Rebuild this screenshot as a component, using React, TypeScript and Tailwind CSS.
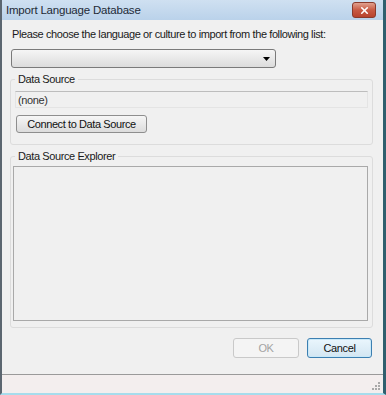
import { X } from "lucide-react";

function GripDots() {
  // resize grip in the status bar corner
  const dots = [
    [7, 1],
    [4, 4],
    [7, 4],
    [1, 7],
    [4, 7],
    [7, 7],
  ];
  return (
    <svg width="10" height="10" viewBox="0 0 10 10">
      {dots.map(([x, y]) => (
        <rect key={`${x}-${y}`} x={x} y={y} width="2" height="2" fill="#a9a9a9" />
      ))}
    </svg>
  );
}

export default function App() {
  return (
    <div
      className="flex h-[395px] w-[386px] flex-col overflow-hidden border-l-2 border-r-[3px] border-b-2 border-l-[#5b6670] border-r-[#2f5f6e] border-b-[#a6dcec] bg-[#f0f0f0] text-[11px] leading-[14px] tracking-[-0.4px] text-[#1a1a1a]"
      style={{ fontFamily: '"Liberation Sans", Arial, sans-serif' }}
    >
      {/* Title bar */}
      <div className="flex h-[20px] shrink-0 items-center justify-between bg-gradient-to-b from-[#cfe0f1] to-[#bad2ea] pl-[4px] pr-[7px]">
        <span className="text-[11.5px] tracking-[-0.2px] text-[#1e2a36]">Import Language Database</span>
        <div className="flex h-[16px] w-[24px] items-center justify-center rounded-[3px] border border-[#8a3a2c] bg-gradient-to-b from-[#e0a08f] via-[#c85a44] to-[#b8432e]">
          <X className="h-[11px] w-[11px] text-white" strokeWidth={3.5} />
        </div>
      </div>

      {/* Body */}
      <p className="ml-[10px] mt-[7px] whitespace-nowrap">
        Please choose the language or culture to import from the following list:
      </p>

      {/* Combobox */}
      <div className="ml-[9px] mt-[8px] flex h-[19px] w-[265px] items-center justify-end rounded-[3px] border border-[#7a7a7a] bg-gradient-to-b from-[#f5f5f5] to-[#dcdcdc] pr-[5px]">
        <svg width="7" height="4" viewBox="0 0 7 4">
          <path d="M0 0 H7 L3.5 4 Z" fill="#000" />
        </svg>
      </div>

      {/* Data Source group */}
      <fieldset className="ml-[8px] mt-[4px] w-[363px] rounded-[3px] border border-[#dcdcdc] pb-[11px]">
        <legend className="ml-[4px] px-[3px]">Data Source</legend>
        <div className="ml-[4px] mt-[5px] flex h-[17px] w-[353px] items-center border border-[#e4e4e4] border-t-[#bdbdbd] pl-[2px] text-[#333]">
          (none)
        </div>
        <button className="ml-[5px] mt-[7px] flex h-[18px] w-[131px] items-center justify-center rounded-[3px] border border-[#8e8e8e] bg-gradient-to-b from-[#f6f6f6] to-[#dcdcdc] text-[11px] tracking-[-0.4px] text-[#111]">
          Connect to Data Source
        </button>
      </fieldset>

      {/* Data Source Explorer group */}
      <fieldset className="ml-[8px] mt-[4px] w-[363px] rounded-[3px] border border-[#dcdcdc] pb-[6px]">
        <legend className="ml-[4px] px-[3px]">Data Source Explorer</legend>
        <div className="ml-[2px] mt-[3px] h-[155px] w-[355px] border border-[#a9a9a9] bg-[#f0f0f0]" />
      </fieldset>

      {/* Buttons */}
      <div className="mr-[11px] mt-[10px] flex justify-end gap-[8px]">
        <button className="flex h-[20px] w-[66px] items-center justify-center rounded-[3px] border border-[#c9c9c9] bg-[#f4f4f4] text-[11px] text-[#a3a3a3]">
          OK
        </button>
        <button className="flex h-[20px] w-[65px] items-center justify-center rounded-[3px] border border-[#3c7fb1] bg-gradient-to-b from-[#eaf6fd] to-[#d3e6f2] text-[11px] tracking-[-0.4px] text-[#111] shadow-[inset_0_0_0_1px_#c8e8f8]">
          Cancel
        </button>
      </div>

      <div className="flex-1" />

      {/* Status bar */}
      <div className="flex h-[19px] shrink-0 items-end justify-end border-t border-[#9a9a9a] bg-[#f3eeee] pb-[2px] pr-[2px]">
        <GripDots />
      </div>
    </div>
  );
}
